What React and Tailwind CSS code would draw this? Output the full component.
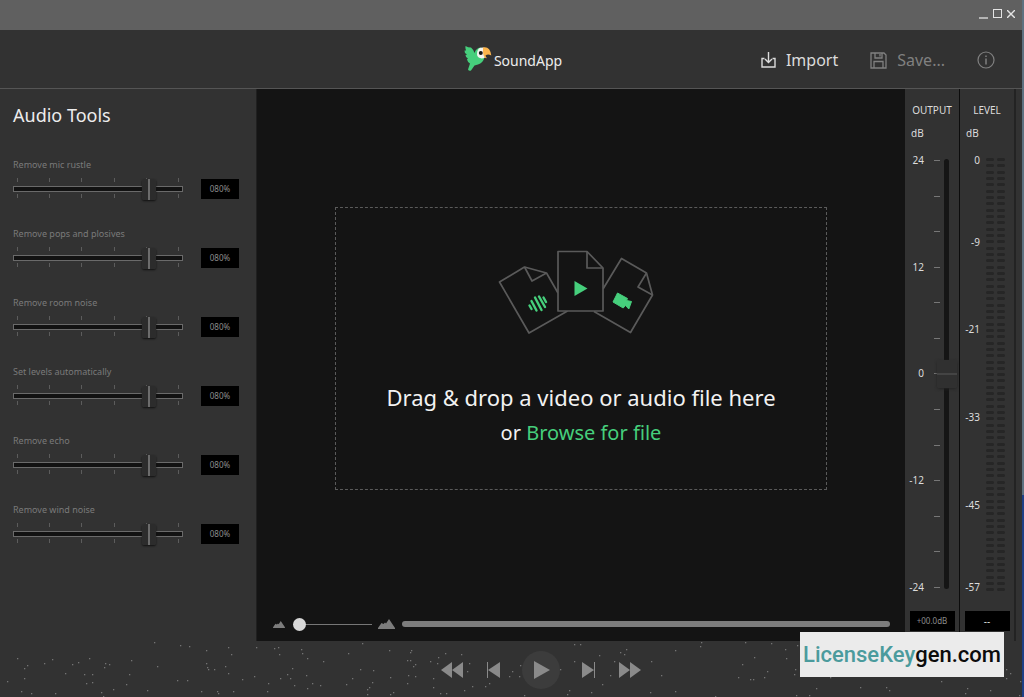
import React, { useState } from 'react';

const TOOLS = [
  'Remove mic rustle',
  'Remove pops and plosives',
  'Remove room noise',
  'Set levels automatically',
  'Remove echo',
  'Remove wind noise',
];

const OUTPUT_MARKS = ['24', '', '', '12', '', '', '0', '', '', '-12', '', '', '-24'];

const LEVEL_MARKS = [
  { label: '0', size: 'h-[82px]' },
  { label: '-9', size: 'h-[87px]' },
  { label: '-21', size: 'h-[88px]' },
  { label: '-33', size: 'h-[88px]' },
  { label: '-45', size: 'h-[82px]' },
  { label: '-57', size: 'h-[13px]' },
];

// specks scattered over the transport bar
const SPECKS = [
  [17, 17], [24, 27], [27, 24], [44, 22], [52, 18], [72, 23], [78, 21], [89, 17], [105, 22], [109, 23],
  [104, 26], [131, 19], [154, 1], [157, 25], [180, 4], [189, 5], [206, 9], [228, 6], [231, 13], [206, 22],
  [207, 26], [208, 28], [214, 28], [225, 25], [228, 32], [254, 35], [242, 38], [187, 39], [177, 39], [129, 33],
  [84, 33], [92, 33], [92, 41], [86, 42], [65, 32], [7, 40], [24, 37], [21, 50], [31, 52], [55, 52],
  [126, 43], [113, 48], [101, 51], [103, 55], [147, 49], [201, 50], [217, 50], [218, 52], [233, 50], [256, 6],
  [274, 7], [278, 6], [301, 8], [302, 12], [279, 13], [307, 17], [323, 20], [348, 12], [362, 2], [292, 27],
  [287, 33], [290, 37], [280, 37], [268, 42], [267, 50], [294, 44], [306, 34], [312, 42], [307, 47], [320, 44],
  [346, 43], [352, 37], [360, 28], [373, 29], [372, 41], [367, 48], [369, 46], [367, 53], [389, 9], [411, 9],
  [410, 11], [407, 19], [410, 19], [415, 23], [413, 25], [390, 36], [408, 34], [415, 35], [407, 42], [393, 51],
  [390, 53], [430, 20], [438, 16], [445, 12], [437, 22], [433, 37], [433, 46], [440, 52], [446, 52], [461, 13],
  [469, 22], [467, 30], [472, 45], [464, 49], [485, 45], [489, 42], [509, 35], [512, 30], [520, 24], [519, 35],
  [524, 54], [560, 28], [574, 3], [580, 3], [574, 20], [599, 14], [614, 20], [620, 11], [626, 8], [624, 13],
  [610, 34], [602, 43], [591, 51], [569, 49], [567, 53], [651, 20], [661, 34], [650, 51], [675, 9], [700, 5],
  [701, 1], [745, 1], [771, 2], [754, 16], [742, 23], [767, 30], [764, 36], [738, 36], [750, 38], [753, 38],
  [675, 50], [715, 55], [786, 17], [797, 4], [785, 8], [795, 28], [794, 33], [830, 36], [816, 47], [809, 54],
  [796, 54], [860, 46], [886, 46], [889, 49], [941, 40], [967, 47], [965, 52], [990, 49], [1020, 40], [1019, 54],
  [1006, 28], [1010, 32], [1006, 37],
];

function Logo() {
  return (
    <svg width="28" height="28" viewBox="0 0 28 28" aria-hidden="true">
      <path
        d="M1.500 1Q4 2.500 7 2.500Q9 4 10.500 8Q12 3 16.500 2.500L20 5L20.500 12.500Q19 18 14 19.500L10.500 20.500L7 25.500Q5 26.500 4 24.500L6 18.500Q3.500 17 3 14.500Q3.500 13.500 4 13.500Q1.500 12.500 1.500 10Q2.500 9.500 3 9.500Q0 7.500 0.500 5.500L2 5.500Q1 3 1.500 1Z"
        fill="#46cf7c"
      />
      <path d="M13 9Q13 4 16.500 2.800Q19.500 2 21 3L21 12.500Q18 14 16 13Q13 12 13 9Z" fill="#f4f4f0" />
      <path d="M19 2.500Q26 1 27.300 10.500Q24 8.500 21.500 10.500Q22 12.500 23 13Q18.500 14.500 19 2.500Z" fill="#fcb54c" />
      <circle cx="16.800" cy="8" r="2" fill="#151515" />
    </svg>
  );
}

function ToolSlider({ name }) {
  const [value, setValue] = useState(80);
  const id = name.toLowerCase().replace(/ /g, '-');

  return (
    <div className="h-[69px]">
      <label htmlFor={id} className="block text-[9px] leading-4 text-[#7a7a7a]">{name}</label>
      <div className="mt-[5px] flex items-center justify-between">
        <div className="grid w-[170px]">
          <div className="flex h-5 justify-between px-1 [grid-area:1/1]">
            {[0, 1, 2, 3, 4, 5].map((i) => (
              <div key={i} className="flex flex-col justify-between">
                <span className="h-1 w-px bg-[#5c5c5c]" />
                <span className="h-1 w-px bg-[#5c5c5c]" />
              </div>
            ))}
          </div>
          <input
            id={id}
            type="range"
            min="0"
            max="96"
            value={value}
            onChange={(e) => setValue(Number(e.target.value))}
            className="h-[21px] w-full appearance-none bg-transparent [grid-area:1/1] [&::-webkit-slider-runnable-track]:h-[6px] [&::-webkit-slider-runnable-track]:border [&::-webkit-slider-runnable-track]:border-[#6a6a6a] [&::-webkit-slider-runnable-track]:bg-[#121212] [&::-webkit-slider-thumb]:mt-[-8px] [&::-webkit-slider-thumb]:h-[21px] [&::-webkit-slider-thumb]:w-[14px] [&::-webkit-slider-thumb]:appearance-none [&::-webkit-slider-thumb]:rounded-xs [&::-webkit-slider-thumb]:bg-[linear-gradient(90deg,#2c2c2c_6px,#6c6c6c_6px,#6c6c6c_8px,#2c2c2c_8px)] [&::-webkit-slider-thumb]:shadow-[0_1px_2px_#111]"
          />
        </div>
        <output htmlFor={id} className="flex h-5 w-[38px] items-center justify-center bg-black text-[8px] text-[#8c8c8c]">
          {String(value).padStart(3, '0')}%
        </output>
      </div>
    </div>
  );
}

function FilesDrawing() {
  return (
    <svg width="156" height="86" viewBox="0 0 156 86" fill="none" stroke="#5a5a5a" strokeWidth="1.700" strokeLinejoin="round" aria-hidden="true">
      <path d="M60 44L48.500 24L26.500 18L1.500 33L31 84L69.500 62" />
      <path d="M26.500 18L34 32L48.500 24" />
      <path d="M105 40L123.500 9.500L148.500 24L154.500 46L132.500 83.500L96 62.500" />
      <path d="M148.500 24L140 38L154.500 46" />
      <path d="M60 2.500H89L105 19V62H60Z" fill="#141414" />
      <path d="M89 2.500V19H105" />
      <path d="M76.500 32V47L89.500 39.500Z" fill="#46cf7c" stroke="none" />
      <path d="M31.500 56.500L33.500 60M33.500 52L38.500 61.500M37 48.500L43.500 61M41 47.500L47 58M45.500 48.500L48 53" stroke="#46cf7c" strokeWidth="2.400" strokeLinecap="round" />
      <path d="M119.500 44L129.500 49.500L128.500 51.500L133.500 52.500L130.800 60L127.500 56.500L125.200 59L115 53Z" fill="#46cf7c" stroke="#46cf7c" strokeWidth="1" />
    </svg>
  );
}

function Mountains({ width, height }) {
  return (
    <svg width={width} height={height} viewBox="0 0 17 10" fill="#7d7d7d" aria-hidden="true">
      <path d="M0 10V9L3.500 4L5.500 5L7 3.500L8 4.500L11 0L17 9V10Z" />
    </svg>
  );
}

function OutputPanel() {
  const [gain, setGain] = useState(0);

  return (
    <section className="flex w-[54px] flex-col text-[10px] text-[#dcdcdc]">
      <h2 className="mt-[13px] text-center leading-4">OUTPUT</h2>
      <label htmlFor="gain" className="mt-[7px] pl-1.5 leading-4">dB</label>
      <div className="mt-[13px] flex h-[440px]">
        <div className="flex w-[35px] flex-col justify-between">
          {OUTPUT_MARKS.map((mark, i) => (
            <div key={i} className="flex h-[13px] items-center justify-between">
              <span className="w-[19px] text-right">{mark}</span>
              <span className="h-px w-1.5 bg-[#777]" />
            </div>
          ))}
        </div>
        <input
          id="gain"
          type="range"
          min="-24"
          max="24"
          value={gain}
          onChange={(e) => setGain(Number(e.target.value))}
          className="mt-[5px] ml-[-4px] h-[430px] w-5 appearance-none bg-transparent [direction:rtl] [writing-mode:vertical-lr] [&::-webkit-slider-runnable-track]:w-[5px] [&::-webkit-slider-runnable-track]:rounded-full [&::-webkit-slider-runnable-track]:bg-[#151515] [&::-webkit-slider-thumb]:ml-[-7px] [&::-webkit-slider-thumb]:h-7 [&::-webkit-slider-thumb]:w-5 [&::-webkit-slider-thumb]:appearance-none [&::-webkit-slider-thumb]:rounded-xs [&::-webkit-slider-thumb]:bg-[linear-gradient(#303030_13px,#444_13px,#444_15px,#303030_15px)] [&::-webkit-slider-thumb]:shadow-[0_1px_3px_#242424]"
        />
      </div>
      <output htmlFor="gain" className="mx-auto mt-[17px] mb-2 flex h-5 w-[45px] items-center justify-center bg-black text-[8px] text-[#8c8c8c]">
        {gain < 0 ? '-' : '+'}{String(Math.abs(gain)).padStart(2, '0')}.0dB
      </output>
    </section>
  );
}

function LevelPanel() {
  return (
    <section className="flex w-[55px] flex-col border-l border-[#0c0c0c] text-[10px] text-[#dcdcdc]">
      <h2 className="mt-[13px] text-center leading-4">LEVEL</h2>
      <p className="mt-[7px] pl-1.5 leading-4">dB</p>
      <div className="mt-[13px] flex h-[440px]">
        <div className="w-5 text-right leading-[13px]">
          {LEVEL_MARKS.map((m) => (
            <div key={m.label} className={m.size}>{m.label}</div>
          ))}
        </div>
        {[0, 1].map((channel) => (
          <div key={channel} className={`${channel === 0 ? 'ml-1.5' : 'ml-[3px]'} mt-1 flex h-[434px] w-2 flex-col justify-between`}>
            {Array.from({ length: 69 }, (_, i) => (
              <span key={i} className="h-[3px] rounded-full bg-[#262626]" />
            ))}
          </div>
        ))}
      </div>
      <output className="mx-auto mt-[17px] mb-2 flex h-5 w-[45px] items-center justify-center bg-black text-[#dcdcdc]">--</output>
    </section>
  );
}

function TransportButton({ label, children }) {
  return (
    <button aria-label={label} className="flex h-6 w-6 items-center justify-center">
      <svg width="24" height="16" viewBox="0 0 24 16" fill="#8a8a8a" aria-hidden="true">{children}</svg>
    </button>
  );
}

export default function App() {
  const [zoom, setZoom] = useState(0);

  return (
    <div className="relative flex min-h-screen bg-[#323232] font-['Noto_Sans',sans-serif]">
      <div className="flex flex-1 flex-col">
        <div className="flex h-[30px] items-center justify-end gap-0.5 bg-[#606060] pr-[5px] pb-[3px]">
          <button aria-label="Minimize" className="flex h-3 w-3 items-end justify-center pb-px"><span className="h-0.5 w-[9px] bg-[#b4b4b4]" /></button>
          <button aria-label="Maximize" className="flex h-3 w-3 items-center justify-center"><span className="h-[9px] w-[9px] border border-[#e4e4e4]" /></button>
          <button aria-label="Close" className="flex h-3 w-3 items-center justify-center">
            <svg width="8" height="8" viewBox="0 0 8 8" stroke="#e4e4e4" strokeWidth="1.400"><path d="M0 0L8 8M8 0L0 8" /></svg>
          </button>
        </div>

        <header className="grid h-[59px] grid-cols-[1fr_auto_1fr] items-center border-b border-[#555]">
          <div />
          <h1 className="flex items-center gap-0.5 pl-1 text-sm text-[#ededed]">
            <Logo />
            <span className="pt-1">SoundApp</span>
          </h1>
          <div className="flex items-center justify-end pt-0.5 pr-[27px] text-base">
            <button className="flex items-center gap-2.5 text-[#dcdcdc]">
              <svg width="15" height="17" viewBox="0 0 15 17" fill="none" stroke="currentColor" strokeWidth="1.400" aria-hidden="true">
                <path d="M3.500 6.500H1V15H14V6.500H11.500M7.500 0V10M4 7L7.500 10.500L11 7" />
              </svg>
              Import
            </button>
            <button className="ml-8 flex items-center gap-2.5 text-[#808080]">
              <svg width="17" height="17" viewBox="0 0 17 17" fill="none" stroke="currentColor" strokeWidth="1.300" aria-hidden="true">
                <path d="M1 1H14L16 3V16H1ZM5 1V6H12V1M10 2V4.500M4 16V9.500H13V16" />
              </svg>
              Save...
            </button>
            <button aria-label="Info" className="ml-8 text-[#808080]">
              <svg width="18" height="18" viewBox="0 0 18 18" fill="none" stroke="currentColor" strokeWidth="1.200" aria-hidden="true">
                <circle cx="9" cy="9" r="8" />
                <path d="M9 7.500V13.500M9 4.500V6" strokeWidth="1.500" />
              </svg>
            </button>
          </div>
        </header>

        <div className="flex flex-1">
          <aside className="w-[257px] shrink-0 border-r border-[#202020] pl-[13px] pr-[17px]">
            <h2 className="mt-[11px] text-lg leading-[30px] text-[#ededed]">Audio Tools</h2>
            <div className="mt-[27px]">
              {TOOLS.map((name) => <ToolSlider key={name} name={name} />)}
            </div>
          </aside>

          <main className="flex flex-1 flex-col bg-[#141414]">
            <div className="flex flex-1 items-center justify-center">
              <div className="flex h-[283px] w-[492px] flex-col items-center border border-dashed border-[#5a5a5a]">
                <div className="mt-[41px] mr-2.5"><FilesDrawing /></div>
                <p className="mt-[45px] text-center text-[22px] leading-[35px] text-[#f2f2f2]">
                  Drag &amp; drop a video or audio file here
                </p>
                <p className="text-center text-xl leading-[35px] text-[#f2f2f2]">
                  or <a href="#browse" className="text-[#46cf7c]">Browse for file</a>
                </p>
              </div>
            </div>
            <div className="flex h-[34px] items-center pl-4 pr-[15px]">
              <Mountains width={12} height={7} />
              <input
                type="range"
                aria-label="Waveform zoom"
                value={zoom}
                onChange={(e) => setZoom(Number(e.target.value))}
                className="ml-2 h-3 w-[79px] appearance-none bg-transparent [&::-webkit-slider-runnable-track]:h-px [&::-webkit-slider-runnable-track]:bg-[#777] [&::-webkit-slider-thumb]:mt-[-6px] [&::-webkit-slider-thumb]:h-[13px] [&::-webkit-slider-thumb]:w-[13px] [&::-webkit-slider-thumb]:appearance-none [&::-webkit-slider-thumb]:rounded-full [&::-webkit-slider-thumb]:bg-[#d8d8d8]"
              />
              <div className="ml-1.5"><Mountains width={17} height={10} /></div>
              <div className="ml-[7px] h-1.5 flex-1 rounded-full bg-[#7d7d7d]" />
            </div>
          </main>

          <OutputPanel />
          <LevelPanel />
          <div className="w-[8px] border-l-2 border-[#232323]" />
        </div>

        <footer className="relative h-14">
          <svg className="absolute inset-0 h-full w-full" fill="#747474" aria-hidden="true">
            {SPECKS.map(([x, y]) => <rect key={`${x}-${y}`} x={x} y={y} width="1.300" height="1.300" />)}
          </svg>
          <div className="relative flex h-full items-center justify-center gap-[17px] pl-[60px] pt-0.5">
            <TransportButton label="Rewind">
              <path d="M12 0V16L1 8ZM23 0V16L12 8Z" />
            </TransportButton>
            <TransportButton label="Previous">
              <path d="M6 0H7V16H6ZM19 0V16L7 8Z" />
            </TransportButton>
            <button aria-label="Play" className="flex h-[38px] w-[38px] items-center justify-center rounded-full bg-[#3c3c3c]">
              <svg width="17" height="18" viewBox="0 0 17 18" fill="#8a8a8a" aria-hidden="true"><path d="M1 0V18L17 9Z" /></svg>
            </button>
            <TransportButton label="Next">
              <path d="M17 0H18V16H17ZM5 0V16L17 8Z" />
            </TransportButton>
            <TransportButton label="Fast forward">
              <path d="M1 0V16L12 8ZM12 0V16L23 8Z" />
            </TransportButton>
          </div>
        </footer>
      </div>
      <div className="w-0.5 bg-[linear-gradient(#5d7180_71%,#1d3f86_71%)]" />

      <div className="absolute right-5 bottom-5 flex h-[45px] w-[204px] items-center justify-center bg-[#ebebeb] font-[Roboto,sans-serif] text-[22px] font-medium text-[#0c0c0c]">
        <span className="text-[#4b9b9d]">LicenseKey</span>gen.com
      </div>
    </div>
  );
}
